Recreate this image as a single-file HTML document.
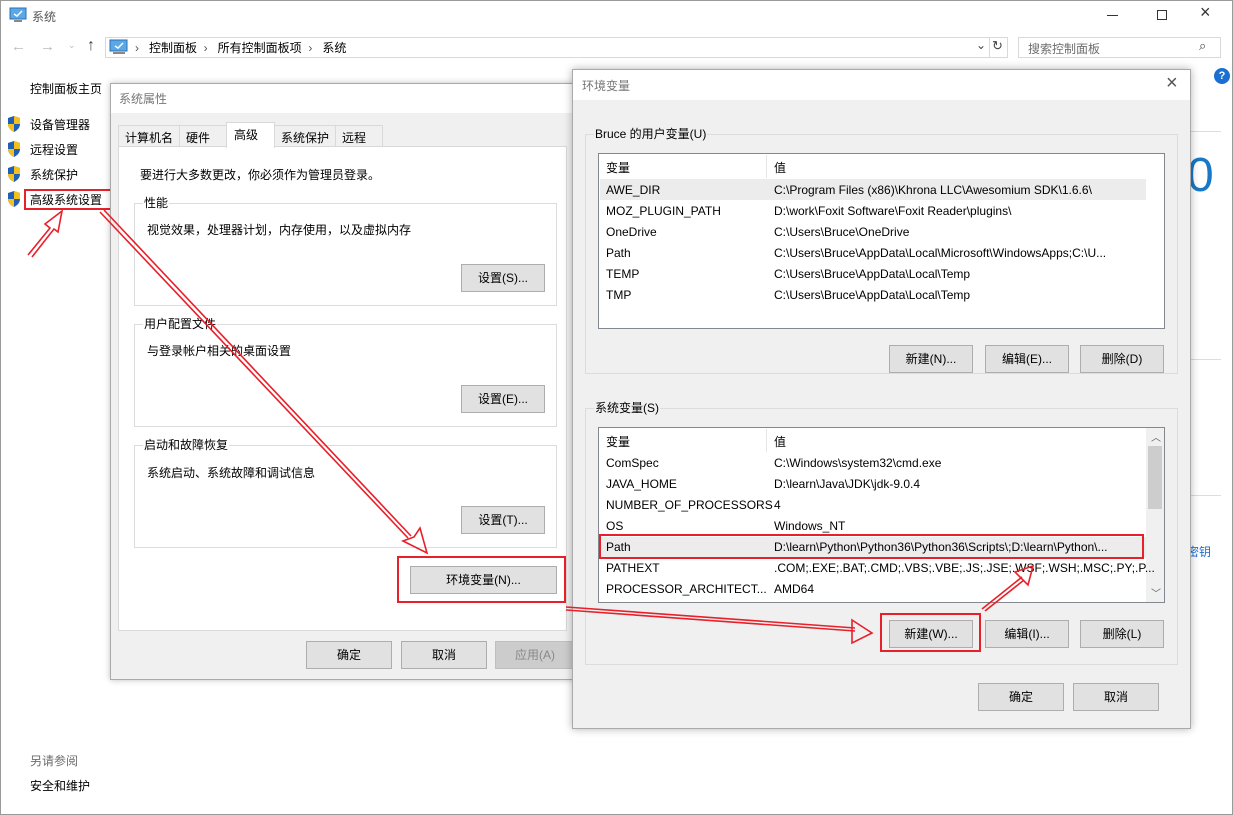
<!DOCTYPE html>
<html><head><meta charset="utf-8">
<style>
*{margin:0;padding:0;box-sizing:border-box}
body{width:1233px;height:815px;overflow:hidden;background:#fff;font-family:"Liberation Sans","Noto Sans CJK SC",sans-serif;font-size:12px;color:#000;position:relative}
.a{position:absolute;white-space:nowrap}
.btn{position:absolute;background:#e1e1e1;border:1px solid #adadad;text-align:center;line-height:26px;font-size:12px}
.grp{position:absolute;border:1px solid #dcdcdc}
.lbl{position:absolute;top:-9px;left:8px;padding:0 1px;line-height:16px}
.shield{position:absolute;width:14px;height:16px}
</style></head><body>
<div class="a" style="left:0;top:0;width:1233px;height:815px;border:1px solid #9a9a9a"></div>
<svg class="a" style="left:9px;top:7px" width="18" height="16"><rect x="1" y="1" width="16" height="11" fill="#5aa8e6" stroke="#2b6fb5"/><path d="M5 7l3 2 5-5" stroke="#fff" stroke-width="1.5" fill="none"/><rect x="5" y="13" width="8" height="2" fill="#888"/></svg>
<div class="a" style="left:32px;top:8px;color:#555">系统</div>
<div class="a" style="left:1107px;top:15px;width:11px;height:1px;background:#333"></div>
<div class="a" style="left:1157px;top:10px;width:10px;height:10px;border:1px solid #333"></div>
<div class="a" style="left:1200px;top:2px;font-size:18px;color:#333">×</div>
<div class="a" style="left:11px;top:38px;color:#bbb;font-size:15px">←</div>
<div class="a" style="left:40px;top:38px;color:#bbb;font-size:15px">→</div>
<div class="a" style="left:68px;top:40px;color:#bbb;font-size:9px">⌄</div>
<div class="a" style="left:87px;top:37px;color:#444;font-size:16px">↑</div>
<div class="a" style="left:105px;top:37px;width:903px;height:21px;border:1px solid #d9d9d9"></div>
<svg class="a" style="left:109px;top:39px" width="20" height="16"><rect x="1" y="1" width="17" height="11" fill="#5aa8e6" stroke="#2b6fb5"/><path d="M6 7l3 2 5-5" stroke="#fff" stroke-width="1.5" fill="none"/><rect x="4" y="13" width="12" height="2" fill="#888"/></svg>
<div class="a" style="left:135px;top:39px"><span style="color:#555">›</span>&nbsp;&nbsp; 控制面板 &nbsp;<span style="color:#555">›</span>&nbsp;&nbsp; 所有控制面板项 &nbsp;<span style="color:#555">›</span>&nbsp;&nbsp; 系统</div>
<div class="a" style="left:976px;top:38px;color:#444;font-size:12px">⌄</div>
<div class="a" style="left:989px;top:37px;width:1px;height:21px;background:#d9d9d9"></div>
<div class="a" style="left:992px;top:38px;color:#444;font-size:13px">↻</div>
<div class="a" style="left:1018px;top:37px;width:203px;height:21px;border:1px solid #d9d9d9"></div>
<div class="a" style="left:1028px;top:40px;color:#6d6d6d">搜索控制面板</div>
<div class="a" style="left:1199px;top:38px;color:#444;font-size:13px">⌕</div>
<div class="a" style="left:30px;top:80px">控制面板主页</div>
<svg class="shield" style="left:7px;top:116px" viewBox="0 0 14 16"><path d="M7 0L13 2V8C13 12 10 14.5 7 16C4 14.5 1 12 1 8V2Z" fill="#1f5fb5"/><path d="M7 0V8H13V2Z M7 8V16C4 14.5 1 12 1 8Z" fill="#f4c01e"/></svg>
<svg class="shield" style="left:7px;top:141px" viewBox="0 0 14 16"><path d="M7 0L13 2V8C13 12 10 14.5 7 16C4 14.5 1 12 1 8V2Z" fill="#1f5fb5"/><path d="M7 0V8H13V2Z M7 8V16C4 14.5 1 12 1 8Z" fill="#f4c01e"/></svg>
<svg class="shield" style="left:7px;top:166px" viewBox="0 0 14 16"><path d="M7 0L13 2V8C13 12 10 14.5 7 16C4 14.5 1 12 1 8V2Z" fill="#1f5fb5"/><path d="M7 0V8H13V2Z M7 8V16C4 14.5 1 12 1 8Z" fill="#f4c01e"/></svg>
<svg class="shield" style="left:7px;top:191px" viewBox="0 0 14 16"><path d="M7 0L13 2V8C13 12 10 14.5 7 16C4 14.5 1 12 1 8V2Z" fill="#1f5fb5"/><path d="M7 0V8H13V2Z M7 8V16C4 14.5 1 12 1 8Z" fill="#f4c01e"/></svg>
<div class="a" style="left:30px;top:116px">设备管理器</div>
<div class="a" style="left:30px;top:141px">远程设置</div>
<div class="a" style="left:30px;top:166px">系统保护</div>
<div class="a" style="left:30px;top:191px">高级系统设置</div>
<div class="a" style="left:24px;top:189px;width:97px;height:21px;border:2px solid #e8202a"></div>
<div class="a" style="left:30px;top:752px;color:#6d6d6d">另请参阅</div>
<div class="a" style="left:30px;top:777px">安全和维护</div>
<div class="a" style="left:1214px;top:68px;width:16px;height:16px;border-radius:50%;background:#1a6fd0;color:#fff;font-weight:bold;font-size:11px;text-align:center;line-height:16px">?</div>
<div class="a" style="left:1189px;top:131px;width:32px;height:1px;background:#ddd"></div>
<div class="a" style="left:1187px;top:148px;font-size:48px;color:#1878c8;font-family:'Liberation Sans',sans-serif;font-weight:300">0</div>
<div class="a" style="left:1189px;top:359px;width:32px;height:1px;background:#ddd"></div>
<div class="a" style="left:1189px;top:495px;width:32px;height:1px;background:#ddd"></div>
<div class="a" style="left:1187px;top:543px;color:#1a6fd0">密钥</div>

<div class="a" style="left:110px;top:83px;width:470px;height:597px;background:#f0f0f0;border:1px solid #aaa;box-shadow:0 0 6px rgba(0,0,0,.25)"></div>
<div class="a" style="left:111px;top:84px;width:468px;height:29px;background:#fff"></div>
<div class="a" style="left:119px;top:90px;color:#777">系统属性</div>
<div class="a" style="left:118px;top:146px;width:449px;height:485px;background:#fff;border:1px solid #d9d9d9"></div>
<div class="a" style="left:118px;top:125px;width:62px;height:22px;border:1px solid #d9d9d9;background:#f0f0f0;padding:3px 0 0 6px">计算机名</div>
<div class="a" style="left:179px;top:125px;width:48px;height:22px;border:1px solid #d9d9d9;background:#f0f0f0;padding:3px 0 0 6px">硬件</div>
<div class="a" style="left:274px;top:125px;width:62px;height:22px;border:1px solid #d9d9d9;background:#f0f0f0;padding:3px 0 0 6px">系统保护</div>
<div class="a" style="left:335px;top:125px;width:48px;height:22px;border:1px solid #d9d9d9;background:#f0f0f0;padding:3px 0 0 6px">远程</div>
<div class="a" style="left:226px;top:122px;width:49px;height:26px;border:1px solid #d9d9d9;border-bottom:none;background:#fff;padding:3px 0 0 7px">高级</div>
<div class="a" style="left:140px;top:166px">要进行大多数更改，你必须作为管理员登录。</div>
<div class="grp" style="left:134px;top:203px;width:423px;height:103px"><span class="lbl" style="background:#fff">性能</span></div>
<div class="a" style="left:147px;top:221px">视觉效果，处理器计划，内存使用，以及虚拟内存</div>
<div class="btn" style="left:461px;top:264px;width:84px;height:28px">设置(S)...</div>
<div class="grp" style="left:134px;top:324px;width:423px;height:103px"><span class="lbl" style="background:#fff">用户配置文件</span></div>
<div class="a" style="left:147px;top:342px">与登录帐户相关的桌面设置</div>
<div class="btn" style="left:461px;top:385px;width:84px;height:28px">设置(E)...</div>
<div class="grp" style="left:134px;top:445px;width:423px;height:103px"><span class="lbl" style="background:#fff">启动和故障恢复</span></div>
<div class="a" style="left:147px;top:464px">系统启动、系统故障和调试信息</div>
<div class="btn" style="left:461px;top:506px;width:84px;height:28px">设置(T)...</div>
<div class="btn" style="left:410px;top:566px;width:147px;height:28px">环境变量(N)...</div>
<div class="a" style="left:397px;top:556px;width:169px;height:47px;border:2px solid #e8202a"></div>
<div class="btn" style="left:306px;top:641px;width:86px;height:28px">确定</div>
<div class="btn" style="left:401px;top:641px;width:86px;height:28px">取消</div>
<div class="btn" style="left:495px;top:641px;width:80px;height:28px;background:#ccc;border-color:#bfbfbf;color:#888">应用(A)</div>

<div class="a" style="left:572px;top:69px;width:619px;height:660px;background:#f0f0f0;border:1px solid #aaa;box-shadow:0 0 8px rgba(0,0,0,.3)"></div>
<div class="a" style="left:573px;top:70px;width:617px;height:30px;background:#fff"></div>
<div class="a" style="left:582px;top:77px;color:#777">环境变量</div>
<div class="a" style="left:1166px;top:72px;font-size:20px;color:#555">×</div>
<div class="grp" style="left:585px;top:134px;width:593px;height:240px"><span class="lbl" style="background:#f0f0f0">Bruce 的用户变量(U)</span></div>
<div class="a" style="left:598px;top:153px;width:567px;height:176px;background:#fff;border:1px solid #828790"></div>
<div class="a" style="left:766px;top:155px;width:1px;height:23px;background:#e5e5e5"></div>
<div class="a" style="left:606px;top:159px">变量</div><div class="a" style="left:774px;top:159px">值</div>
<div class="a" style="left:600px;top:179px;width:546px;height:21px;background:#ececec"></div>
<div class="a" style="left:606px;top:180px;line-height:21px">AWE_DIR<br>MOZ_PLUGIN_PATH<br>OneDrive<br>Path<br>TEMP<br>TMP</div>
<div class="a" style="left:774px;top:180px;line-height:21px">C:\Program Files (x86)\Khrona LLC\Awesomium SDK\1.6.6\<br>D:\work\Foxit Software\Foxit Reader\plugins\<br>C:\Users\Bruce\OneDrive<br>C:\Users\Bruce\AppData\Local\Microsoft\WindowsApps;C:\U...<br>C:\Users\Bruce\AppData\Local\Temp<br>C:\Users\Bruce\AppData\Local\Temp</div>
<div class="btn" style="left:889px;top:345px;width:84px;height:28px">新建(N)...</div>
<div class="btn" style="left:985px;top:345px;width:84px;height:28px">编辑(E)...</div>
<div class="btn" style="left:1080px;top:345px;width:84px;height:28px">删除(D)</div>

<div class="grp" style="left:585px;top:408px;width:593px;height:257px"><span class="lbl" style="background:#f0f0f0">系统变量(S)</span></div>
<div class="a" style="left:598px;top:427px;width:567px;height:176px;background:#fff;border:1px solid #828790"></div>
<div class="a" style="left:766px;top:429px;width:1px;height:23px;background:#e5e5e5"></div>
<div class="a" style="left:606px;top:433px">变量</div><div class="a" style="left:774px;top:433px">值</div>
<div class="a" style="left:1146px;top:428px;width:18px;height:174px;background:#f0f0f0"></div>
<div class="a" style="left:1148px;top:446px;width:14px;height:63px;background:#cdcdcd"></div>
<div class="a" style="left:1151px;top:429px;font-size:10px;color:#606060">︿</div>
<div class="a" style="left:1151px;top:585px;font-size:10px;color:#606060">﹀</div>
<div class="a" style="left:600px;top:537px;width:546px;height:21px;background:#ececec"></div>
<div class="a" style="left:606px;top:453px;line-height:21px">ComSpec<br>JAVA_HOME<br>NUMBER_OF_PROCESSORS<br>OS<br>Path<br>PATHEXT<br>PROCESSOR_ARCHITECT...</div>
<div class="a" style="left:774px;top:453px;line-height:21px">C:\Windows\system32\cmd.exe<br>D:\learn\Java\JDK\jdk-9.0.4<br>4<br>Windows_NT<br>D:\learn\Python\Python36\Python36\Scripts\;D:\learn\Python\...<br>.COM;.EXE;.BAT;.CMD;.VBS;.VBE;.JS;.JSE;.WSF;.WSH;.MSC;.PY;.P...<br>AMD64</div>
<div class="a" style="left:599px;top:534px;width:545px;height:25px;border:2px solid #e8202a"></div>
<div class="btn" style="left:889px;top:620px;width:84px;height:28px">新建(W)...</div>
<div class="btn" style="left:985px;top:620px;width:84px;height:28px">编辑(I)...</div>
<div class="btn" style="left:1080px;top:620px;width:84px;height:28px">删除(L)</div>
<div class="a" style="left:880px;top:613px;width:101px;height:39px;border:2px solid #e8202a"></div>
<div class="btn" style="left:978px;top:683px;width:86px;height:28px">确定</div>
<div class="btn" style="left:1073px;top:683px;width:86px;height:28px">取消</div>

<svg class="a" style="left:0;top:0" width="1233" height="815">
<g fill="none" stroke="#e8202a" stroke-width="1.6" stroke-linejoin="miter">
<path d="M28 255 L50 228 L45 224 L62 211 L58 232 L54 229 L32 257"/>
<path d="M100 212 L408 538 M104 210 L411 536"/>
<path d="M403 541 L427 553 L420 528 L414 537 Z"/>
<path d="M566 607 L855 628 M566 610 L855 631"/>
<path d="M852 620 L872 633 L852 643 Z"/>
<path d="M982 609 L1022 577 M985 611 L1024 580"/>
<path d="M1015 572 L1033 566 L1028 585 Z"/>
</g>
</svg>
</body></html>
